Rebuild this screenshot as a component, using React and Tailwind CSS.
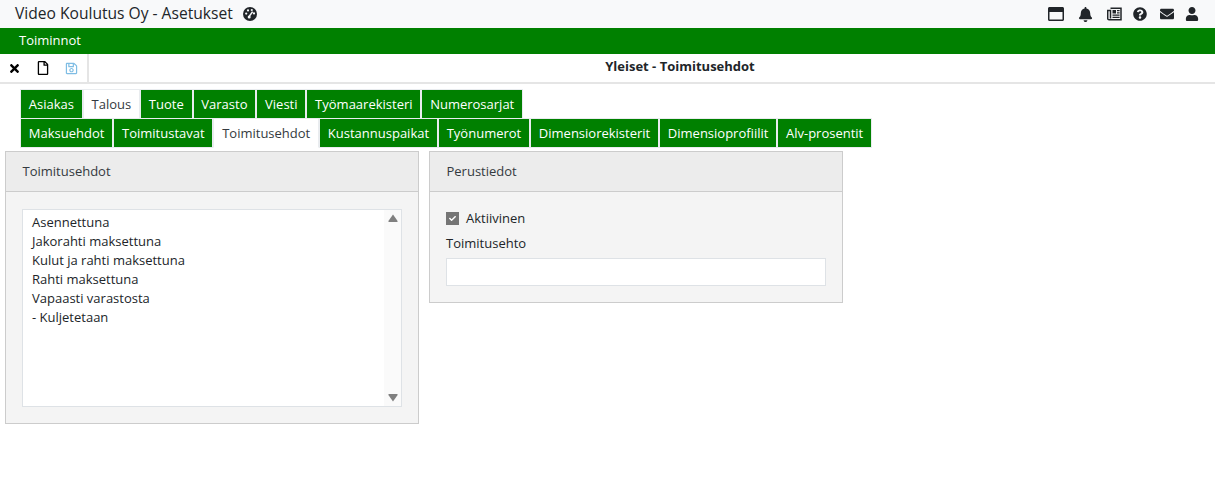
import { FaBell, FaCheck, FaEnvelope, FaQuestionCircle, FaRegFile, FaRegSave, FaRegWindowMaximize, FaTimes, FaUser } from 'react-icons/fa'

const mainTabs = ['Asiakas', 'Talous', 'Tuote', 'Varasto', 'Viesti', 'Työmaarekisteri', 'Numerosarjat']
const subTabs = ['Maksuehdot', 'Toimitustavat', 'Toimitusehdot', 'Kustannuspaikat', 'Työnumerot', 'Dimensiorekisterit', 'Dimensioprofiilit', 'Alv-prosentit']
const terms = ['Asennettuna', 'Jakorahti maksettuna', 'Kulut ja rahti maksettuna', 'Rahti maksettuna', 'Vapaasti varastosta', '- Kuljetetaan']

function GaugeIcon() {
  return (
    <svg width="14" height="14" viewBox="0 0 14 14">
      <circle cx="7" cy="7" r="7" fill="#212529" />
      <circle cx="3.2" cy="6.6" r="1.1" fill="#f8f9fa" />
      <circle cx="5" cy="3.4" r="1.1" fill="#f8f9fa" />
      <circle cx="8.8" cy="3" r="1.1" fill="#f8f9fa" />
      <circle cx="11" cy="6.4" r="1.1" fill="#f8f9fa" />
      <path d="M9.6 4.6 L6.2 9.4" stroke="#f8f9fa" strokeWidth="1.6" />
      <circle cx="6.2" cy="10" r="1.5" fill="#f8f9fa" />
    </svg>
  )
}

function NewsIcon() {
  return (
    <svg width="15" height="14" viewBox="0 0 15 14" fill="none">
      <path d="M3.5 1.2 H14 V12.8 H2 Q0.7 12.8 0.7 11.5 V3.5 H3.5 V11.5" stroke="#212529" strokeWidth="1.5" />
      <rect x="5.5" y="3" width="3.5" height="3.5" fill="#212529" />
      <path d="M10 3.6 H12.6 M10 5.8 H12.6 M5.5 8.2 H12.6 M5.5 10.4 H12.6" stroke="#212529" strokeWidth="1.2" />
    </svg>
  )
}

function TabRow({ tabs, active, className = '' }) {
  return (
    <div className={`flex ${className}`}>
      {tabs.map((tab) => (
        <div
          key={tab}
          className={`h-[30px] border border-[#e9ecef] px-[7.8px] text-[13px] leading-[28px] ${
            tab === active ? 'border-b-white bg-white text-[#343a40]' : 'bg-[#008000] text-white'
          }`}
        >
          {tab}
        </div>
      ))}
    </div>
  )
}

function Panel({ title, className, children }) {
  return (
    <div className={`border border-[#cccccc] bg-[#f4f4f4] ${className}`}>
      <div className="h-[40px] border-b border-[#cccccc] bg-[#ececec] pl-[16.5px] text-[13px] leading-[39px] text-[#343a40]">
        {title}
      </div>
      {children}
    </div>
  )
}

export default function App() {
  return (
    <div className="h-[494px] bg-white font-['Open_Sans',sans-serif] text-[13px] text-[#212529]">
      <div className="flex h-[28px] items-center justify-between bg-[#f8f9fa] pl-[15px] pr-[16px]">
        <div className="flex items-center gap-[10px]">
          <span className="text-[15.6px] text-[#212529]">Video Koulutus Oy - Asetukset</span>
          <GaugeIcon />
        </div>
        <div className="flex items-center text-[#212529]">
          <FaRegWindowMaximize className="size-[16px]" />
          <FaBell className="ml-[14px] size-[15px]" />
          <div className="ml-[14px] flex"><NewsIcon /></div>
          <FaQuestionCircle className="ml-[11px] size-[14px]" />
          <FaEnvelope className="ml-[13px] size-[14px]" />
          <FaUser className="ml-[11px] size-[14px]" />
        </div>
      </div>

      <div className="h-[26px] bg-[#008000] pl-[19px] text-[13px] leading-[25px] text-white">Toiminnot</div>

      <div className="flex h-[30px] border-b-2 border-[#e5e5e5]">
        <div className="flex w-[89px] items-center gap-[15px] border-r-2 border-[#e5e5e5] pl-[8px]">
          <FaTimes className="size-[13px] text-black" />
          <FaRegFile className="size-[14px] text-black" />
          <FaRegSave className="size-[13px] text-[#7fbde4]" />
        </div>
        <div className="flex-1 pl-[56px] text-center text-[13px] leading-[25px] font-bold text-[#212529]">
          Yleiset - Toimitusehdot
        </div>
      </div>

      <div className="pt-[5px] pl-[20px]">
        <TabRow tabs={mainTabs} active="Talous" />
        <TabRow tabs={subTabs} active="Toimitusehdot" className="-mt-px" />
      </div>

      <div className="flex items-start gap-[10px] pt-[3px] pl-[5px]">
        <Panel title="Toimitusehdot" className="w-[414px]">
          <div className="px-4 pt-[17px] pb-[16px]">
            <div className="relative h-[198px] border border-[#dee2e6] bg-white px-[9px] pt-[3px] text-[13px] leading-[19px] text-[#212529]">
              {terms.map((term) => (
                <div key={term}>{term}</div>
              ))}
              <div className="absolute inset-y-0 right-0 flex w-[17px] flex-col items-center justify-between bg-[#fafafa] py-[4px]">
                <svg width="10" height="8" viewBox="0 0 10 8">
                  <path d="M5 0.5 L9.6 7 Q9.8 8 9 8 L1 8 Q0.2 8 0.4 7 Z" fill="#808080" />
                </svg>
                <svg width="10" height="8" viewBox="0 0 10 8">
                  <path d="M5 7.5 L9.6 1 Q9.8 0 9 0 L1 0 Q0.2 0 0.4 1 Z" fill="#808080" />
                </svg>
              </div>
            </div>
          </div>
        </Panel>

        <Panel title="Perustiedot" className="w-[414px]">
          <div className="px-4 pt-[16px] pb-[16px]">
            <div className="flex h-[21px] items-center gap-[7px]">
              <div className="flex size-[13px] items-center justify-center bg-[#757575]">
                <FaCheck className="size-[7px] text-white" />
              </div>
              <span>Aktiivinen</span>
            </div>
            <div className="mt-[4px] h-[21px] leading-[21px]">Toimitusehto</div>
            <div className="mt-[4px] h-[28px] border border-[#dee2e6] bg-white" />
          </div>
        </Panel>
      </div>
    </div>
  )
}
